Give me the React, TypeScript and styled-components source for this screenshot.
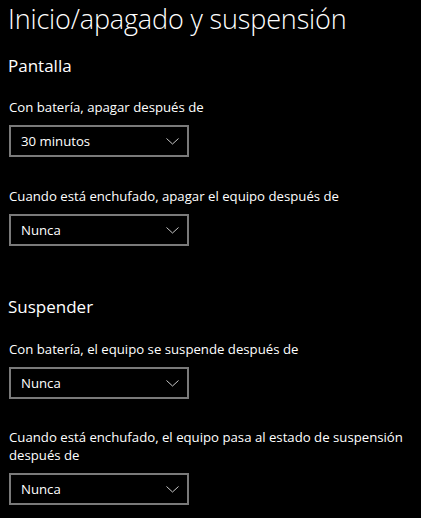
import React from 'react';
import styled, { createGlobalStyle } from 'styled-components';

const GlobalStyle = createGlobalStyle`
    html, body {
        margin: 0;
        padding: 0;
        background: #000;
    }
    body {
        font-family: "Open Sans", "Noto Sans", sans-serif;
        color: #fff;
    }
`

const Page = styled.div`
    display: flex;
    flex-direction: column;
    padding: 0 8px 0 8px;
    width: 421px;
    height: 518px;
    box-sizing: border-box;
    overflow: hidden;
    background: #000;
`

const Title = styled.h1`
    margin: 0;
    padding-top: 1px;
    font-size: 27px;
    font-weight: 300;
    line-height: 36px;
    letter-spacing: -0.15px;
`

const Section = styled.section<{ $top: number }>`
    display: flex;
    flex-direction: column;
    margin-top: ${p => p.$top}px;
`

const SectionTitle = styled.h2`
    margin: 0;
    font-size: 17px;
    font-weight: 400;
    line-height: 24px;
`

const Field = styled.div<{ $top: number }>`
    display: flex;
    flex-direction: column;
    margin-top: ${p => p.$top}px;
`

const Label = styled.label`
    font-size: 13.2px;
    line-height: 18px;
    max-width: 400px;
    padding-left: 1px;
`

const Select = styled.div`
    display: flex;
    align-items: center;
    justify-content: space-between;
    box-sizing: border-box;
    width: 180px;
    height: 32px;
    margin-top: 9px;
    margin-left: 1px;
    padding: 0 8px 0 10px;
    border: 2px solid #7a7a7a;
    font-size: 13.2px;
`

const Chevron = () => (
    <svg width="13" height="7" viewBox="0 0 13 7">
        <polyline points="0.5,0.5 6.5,6 12.5,0.5" fill="none" stroke="#c8c8c8" strokeWidth="1"/>
    </svg>
)

function Dropdown({ value }: { value: string }) {
    return (
        <Select>
            <span>{value}</span>
            <Chevron/>
        </Select>
    )
}

export default function App() {
    return (
        <Page>
            <GlobalStyle/>
            <Title>Inicio/apagado y suspensión</Title>

            <Section $top={17}>
                <SectionTitle>Pantalla</SectionTitle>
                <Field $top={20}>
                    <Label>Con batería, apagar después de</Label>
                    <Dropdown value="30 minutos"/>
                </Field>
                <Field $top={30}>
                    <Label>Cuando está enchufado, apagar el equipo después de</Label>
                    <Dropdown value="Nunca"/>
                </Field>
            </Section>

            <Section $top={49}>
                <SectionTitle>Suspender</SectionTitle>
                <Field $top={21}>
                    <Label>Con batería, el equipo se suspende después de</Label>
                    <Dropdown value="Nunca"/>
                </Field>
                <Field $top={29}>
                    <Label>Cuando está enchufado, el equipo pasa al estado de suspensión después de</Label>
                    <Dropdown value="Nunca"/>
                </Field>
            </Section>
        </Page>
    );
}
